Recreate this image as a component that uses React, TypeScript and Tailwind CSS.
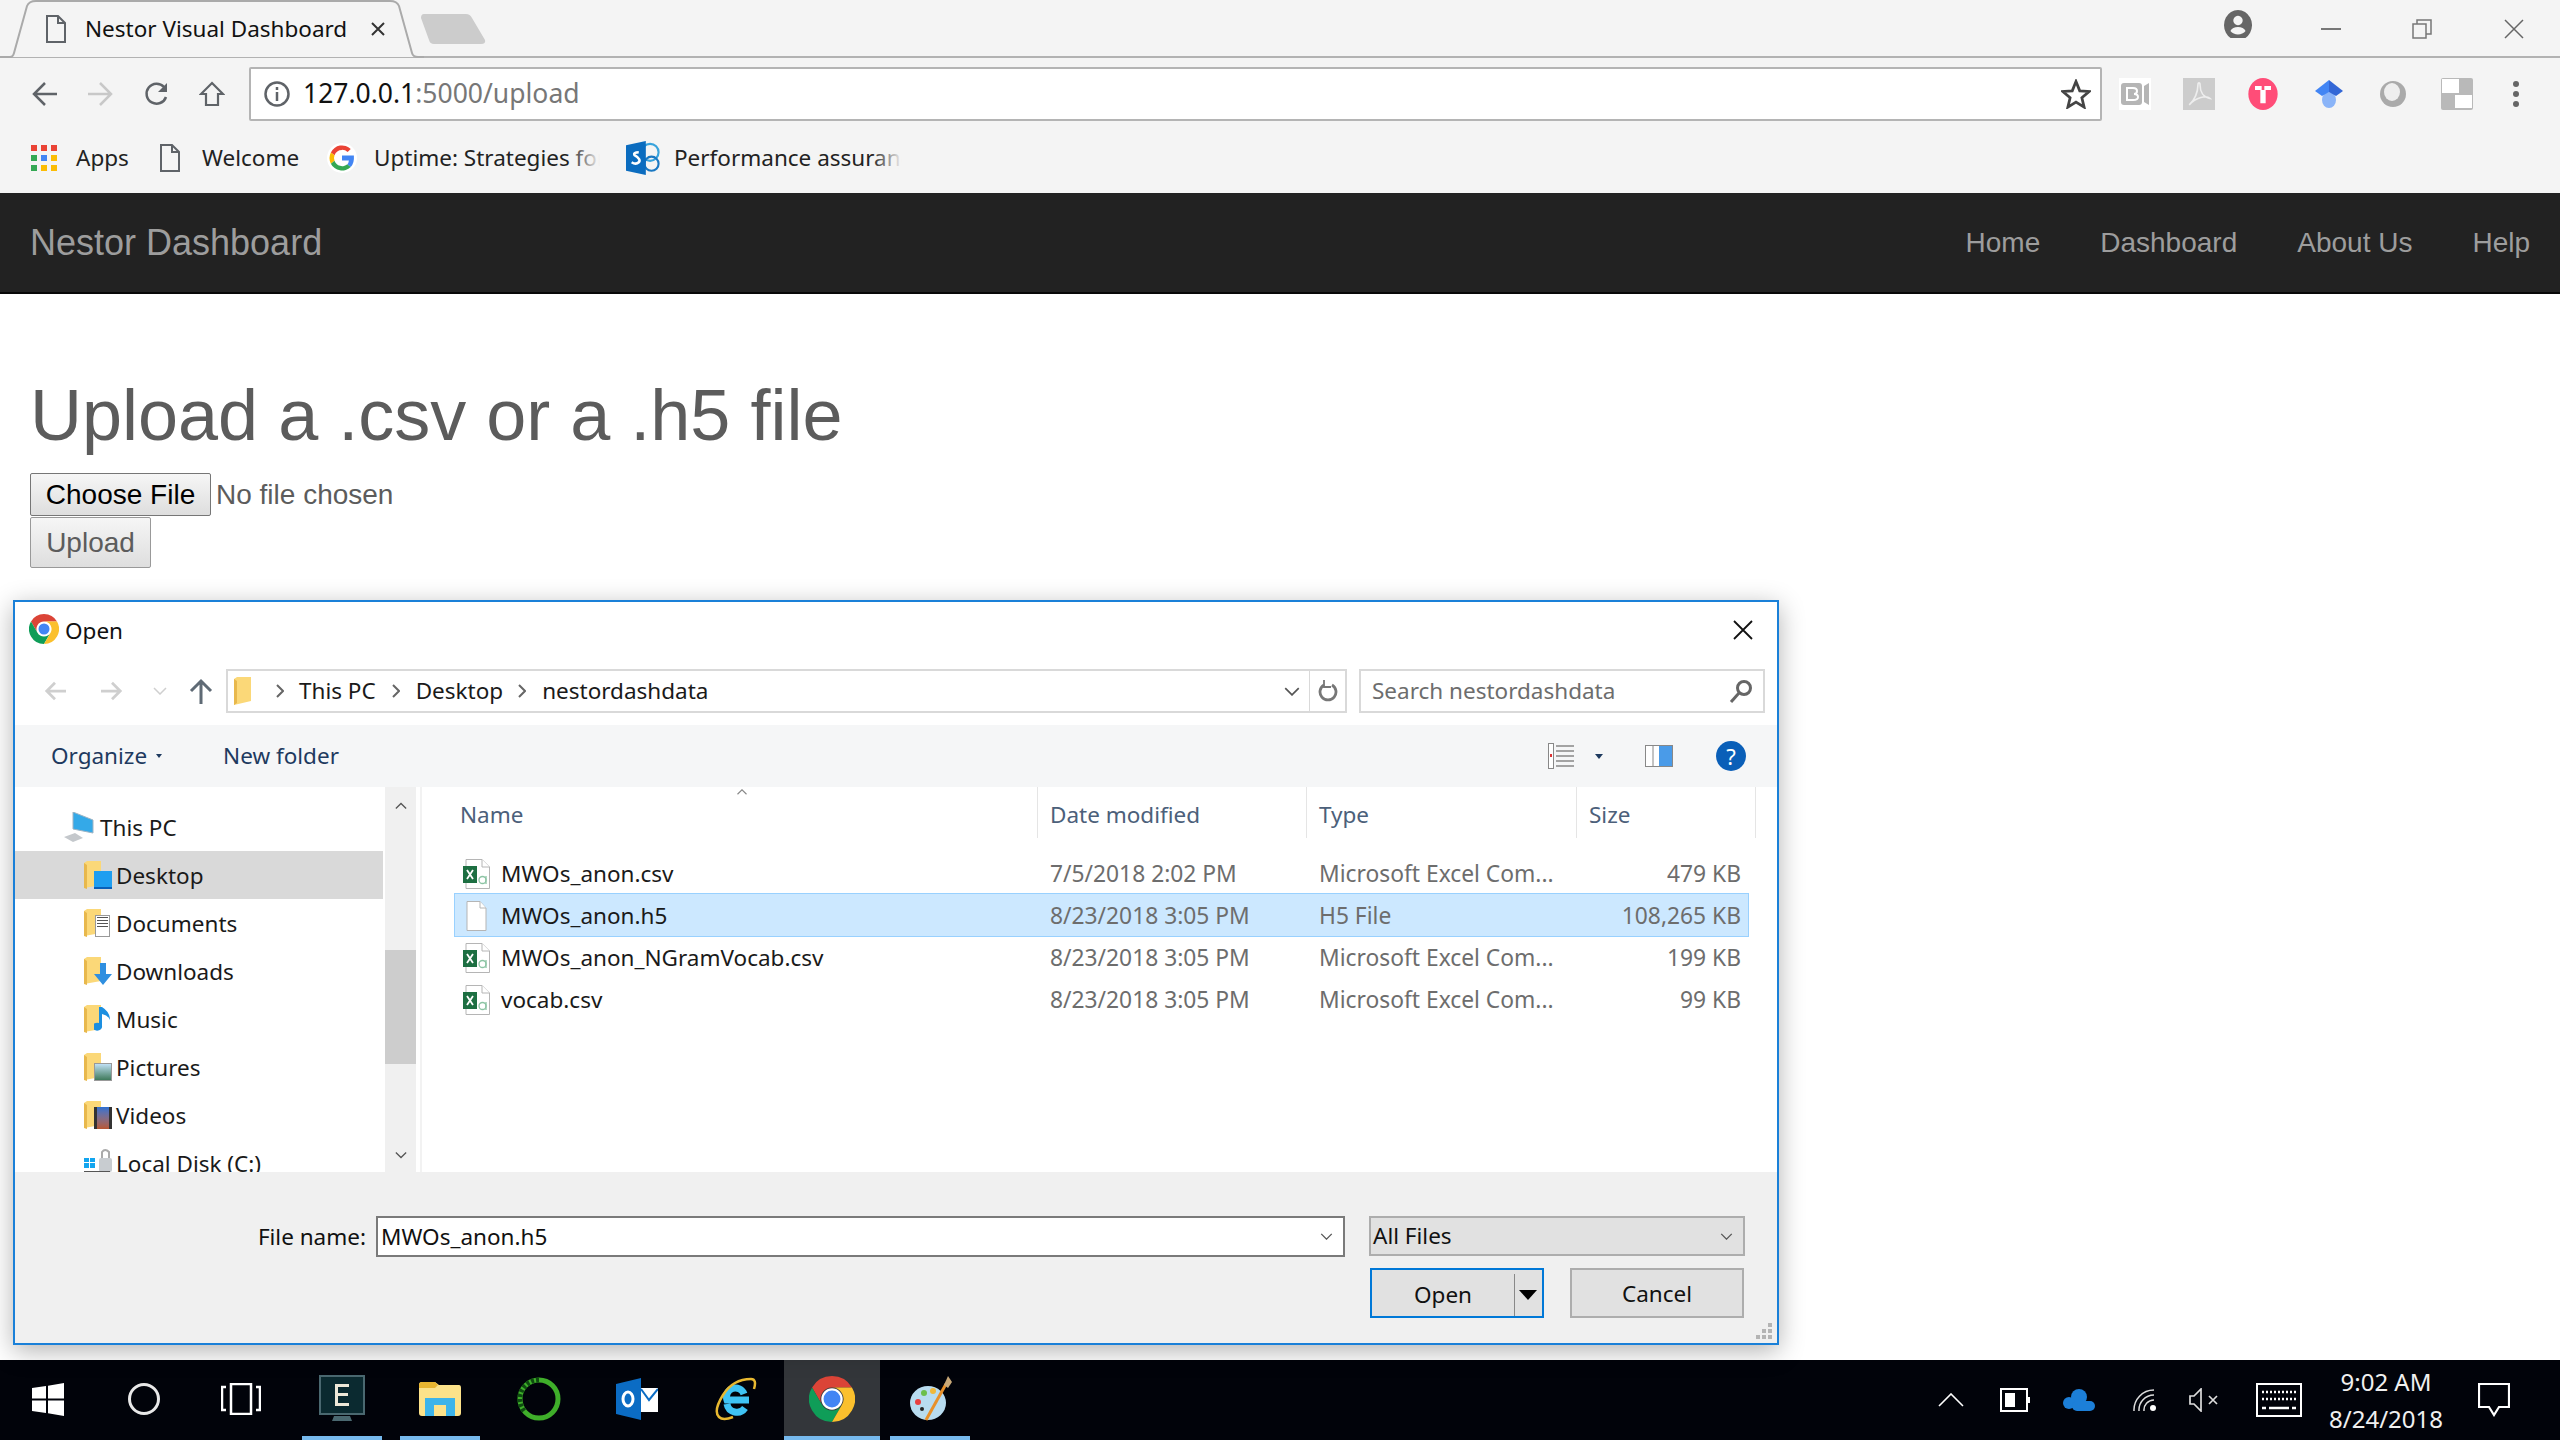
const ui = "font-['Noto_Sans',sans-serif]"

const ChromeLogo = ({ className }: { className: string }) => (
    <svg viewBox="0 0 24 24" className={className}>
        <path fill="#db4437" d="M12 0A12 12 0 0 0 1.6 6L6.8 15A6 6 0 0 1 12 6H22.4A12 12 0 0 0 12 0Z" />
        <path fill="#0f9d58" d="M1.6 6A12 12 0 0 0 12 24L17.2 15A6 6 0 0 1 6.8 15Z" />
        <path fill="#fbc02d" d="M22.4 6H12A6 6 0 0 1 17.2 15L12 24A12 12 0 0 0 22.4 6Z" />
        <circle cx="12" cy="12" r="5.6" fill="#fff" />
        <circle cx="12" cy="12" r="4.4" fill="#4285f4" />
    </svg>
)

const PageGlyph = ({ className }: { className: string }) => (
    <svg viewBox="0 0 20 28" className={className} fill="none" stroke="#5f6368" strokeWidth="2">
        <path d="M1 1H12L19 8V27H1Z" />
        <path d="M12 1V8H19" />
    </svg>
)

const TabStrip = () => (
    <div className="relative flex h-[58px] items-start border-b-2 border-[#b2b2b2]">
        <svg viewBox="0 0 424 58" className="absolute left-0 top-0 h-[58px] w-[424px]">
            <path d="M0 57H10Q13 57 14 53L27 6Q29 1 36 1H390Q397 1 399 6L412 53Q413 57 418 57H424" fill="#f4f4f4" stroke="#aaaaaa" strokeWidth="2" />
        </svg>
        <div className="relative ml-[46px] flex h-[57px] items-center">
            <PageGlyph className="h-[28px] w-[20px]" />
            <span className={`${ui} ml-[19px] w-[261px] whitespace-nowrap text-[22.5px] text-[#111]`}>Nestor Visual Dashboard</span>
            <svg viewBox="0 0 14 14" className="ml-[25px] h-[14px] w-[14px]" stroke="#333" strokeWidth="2">
                <path d="M1 1L13 13M13 1L1 13" />
            </svg>
            <svg viewBox="0 0 66 32" className="ml-[35px] h-[32px] w-[66px]">
                <path d="M4 1H46Q50 1 52 5L65 27Q66 31 61 31H14Q10 31 9 27L1 5Q1 1 4 1Z" fill="#cccccc" />
            </svg>
        </div>
        <div className="ml-auto flex h-[57px] items-center">
            <svg viewBox="0 0 24 24" className="mb-[10px] mr-[69px] h-[28px] w-[28px]">
                <path fill="#666" fillRule="evenodd" d="M12 0a12 13 0 1 0 .01 0ZM12 5a4 4 0 1 1-.01 0ZM5.500 18c1-2.500 3.500-3.500 6.500-3.500s5.500 1 6.500 3.500c-1.500 2-4 3-6.500 3s-5-1-6.500-3Z" />
            </svg>
            <div className="mr-[71px] h-[2px] w-[20px] bg-[#777]" />
            <svg viewBox="0 0 20 20" className="mr-[72px] h-[20px] w-[20px]" fill="none" stroke="#777" strokeWidth="1.500">
                <path d="M1 5H14V19H1ZM5 5V1H19V15H14" />
            </svg>
            <svg viewBox="0 0 20 20" className="mr-[36px] h-[20px] w-[20px]" stroke="#666" strokeWidth="1.500">
                <path d="M1 1L19 19M19 1L1 19" />
            </svg>
        </div>
    </div>
)

const ExtensionIcons = () => (
    <div className="ml-[17px] flex items-center">
        <div className="flex h-[32px] w-[32px] items-center justify-center bg-white">
            <svg viewBox="0 0 28 24" className="h-[24px] w-[28px]">
                <rect x="0" y="1" width="21" height="22" rx="3" fill="#b5b5b5" />
                <path d="M23 4L28 1V23L23 20Z" fill="#b5b5b5" />
                <path d="M6 6H12Q16 6 16 9T13 12Q17 12 17 15T12 18H6Z" fill="none" stroke="#fff" strokeWidth="2" />
            </svg>
        </div>
        <div className="ml-[32px] flex h-[32px] w-[32px] items-center justify-center bg-[#cccccc]">
            <svg viewBox="0 0 24 24" className="h-[26px] w-[26px]" fill="none" stroke="#eeeeee" strokeWidth="1.500">
                <path d="M3 22C8 18 11 10 11 4C11 1 13 1 13 4C13 10 16 15 22 16C19 13 9 15 3 22Z" />
            </svg>
        </div>
        <svg viewBox="0 0 24 24" className="ml-[32px] h-[32px] w-[32px]">
            <ellipse cx="12" cy="12" rx="11" ry="12" fill="#ff4d78" />
            <path d="M6 6H11V9H14V19H10V9H6ZM13 6H18V9H13Z" fill="#fff" />
        </svg>
        <svg viewBox="0 0 28 28" className="ml-[36px] h-[28px] w-[28px]">
            <ellipse cx="14" cy="20" rx="7" ry="8" fill="#8ab4f8" />
            <path d="M14 0L28 11L21 16Q14 12 14 12Z" fill="#3367d6" />
            <path d="M14 0L0 11L7 16Q14 12 14 12Z" fill="#4285f4" />
        </svg>
        <svg viewBox="0 0 28 28" className="ml-[36px] h-[28px] w-[28px]">
            <circle cx="14" cy="14" r="13" fill="#aaaaaa" />
            <ellipse cx="13" cy="12" rx="8" ry="9" fill="#eeeeee" />
        </svg>
        <div className="ml-[34px] flex h-[32px] w-[32px] flex-col rounded-[2px] bg-[#b9b9b9] p-[1px]">
            <div className="h-[14px] w-[17px] bg-white" />
            <div className="ml-auto mt-[2px] h-[13px] w-[17px] bg-white" />
        </div>
        <div className="ml-[40px] flex flex-col gap-[4px]">
            <div className="h-[6px] w-[6px] rounded-full bg-[#666]" />
            <div className="h-[6px] w-[6px] rounded-full bg-[#666]" />
            <div className="h-[6px] w-[6px] rounded-full bg-[#666]" />
        </div>
    </div>
)

const AddressRow = () => (
    <div className="flex h-[72px] items-center pb-[2px] pt-[2px]">
        <svg viewBox="0 0 26 26" className="ml-[32px] h-[26px] w-[26px]" fill="none" stroke="#5f6368" strokeWidth="2.500">
            <path d="M25 13H3M13 2L2 13L13 24" />
        </svg>
        <svg viewBox="0 0 26 26" className="ml-[29px] h-[26px] w-[26px]" fill="none" stroke="#c8c8c8" strokeWidth="2.500">
            <path d="M1 13H23M13 2L24 13L13 24" />
        </svg>
        <svg viewBox="0 0 26 26" className="ml-[31px] h-[26px] w-[26px]" fill="none" stroke="#5f6368" strokeWidth="2.500">
            <path d="M22 16A10 10 0 1 1 20 6" />
            <path d="M23 2V11H14" fill="#5f6368" stroke="none" />
        </svg>
        <svg viewBox="0 0 26 26" className="ml-[29px] h-[26px] w-[26px]" fill="none" stroke="#5f6368" strokeWidth="2.200">
            <path d="M13 2L24 13H19V24H7V13H2Z" />
        </svg>
        <div className="ml-[24px] flex h-[54px] w-[1853px] items-center rounded-[2px] border-2 border-[#b4b4b4] bg-white">
            <svg viewBox="0 0 26 26" className="ml-[13px] h-[26px] w-[26px]" fill="none" stroke="#5f6368" strokeWidth="2.500">
                <circle cx="13" cy="13" r="11.500" />
                <path d="M13 11V20M13 6V9" />
            </svg>
            <span className={`${ui} ml-[13px] text-[26.5px] text-[#111]`}>
                127.0.0.1<span className="text-[#777]">:5000/upload</span>
            </span>
            <svg viewBox="0 0 24 24" className="ml-auto mr-[9px] h-[30px] w-[30px]" fill="none" stroke="#444" strokeWidth="2.200">
                <path d="M12 2L15 9.500L22.500 10L16.700 15L18.500 22.500L12 18.500L5.500 22.500L7.300 15L1.500 10L9 9.500Z" />
            </svg>
        </div>
        <ExtensionIcons />
    </div>
)

const BookmarksRow = () => (
    <div className={`${ui} flex h-[63px] items-center pb-[8px] text-[22.5px] text-[#222]`}>
        <div className="ml-[31px] grid h-[26px] w-[26px] grid-cols-3 gap-[4px]">
            {['#ea4335', '#ea4335', '#ea4335', '#34a853', '#4285f4', '#fbbc05', '#34a853', '#fbbc05', '#fbbc05'].map((c, i) => (
                <div key={i} style={{ backgroundColor: c }} />
            ))}
        </div>
        <span className="ml-[19px] w-[55px]">Apps</span>
        <PageGlyph className="ml-[29px] h-[28px] w-[20px]" />
        <span className="ml-[22px] w-[98px]">Welcome</span>
        <svg viewBox="0 0 24 24" className="ml-[27px] h-[30px] w-[30px]">
            <circle cx="12" cy="12" r="12" fill="#fff" />
            <path d="M12 5.500A6.500 6.500 0 0 1 16.500 7.200L19 4.700A10 10 0 0 0 3.100 7.500L6 9.800A6.500 6.500 0 0 1 12 5.500Z" fill="#ea4335" />
            <path d="M6 9.800L3.100 7.500A10 10 0 0 0 3.100 16.500L6 14.200A6.500 6.500 0 0 1 6 9.800Z" fill="#fbbc05" />
            <path d="M6 14.200L3.100 16.500A10 10 0 0 0 19 19.200L16.300 17A6.500 6.500 0 0 1 6 14.200Z" fill="#34a853" />
            <path d="M21.500 10H12V14H17.500A5 5 0 0 1 16.300 17L19 19.200Q22 16 21.500 10Z" fill="#4285f4" />
        </svg>
        <span className="relative ml-[17px] w-[226px] overflow-hidden whitespace-nowrap">
            Uptime: Strategies for Building
            <span className="absolute right-0 top-0 h-full w-[30px] bg-gradient-to-r from-transparent to-[#f4f4f4]" />
        </span>
        <svg viewBox="0 0 24 24" className="ml-[26px] h-[34px] w-[34px]">
            <circle cx="17" cy="8" r="6" fill="none" stroke="#38a3dc" strokeWidth="1.500" />
            <circle cx="18" cy="16" r="5" fill="none" stroke="#1a78c2" strokeWidth="1.500" />
            <path d="M0 3L14 0V24L0 21Z" fill="#0b6cbf" />
            <path d="M4 15Q7 17 9 15T6 10Q5 8 9 8" fill="none" stroke="#fff" strokeWidth="1.800" />
        </svg>
        <span className="relative ml-[14px] w-[228px] overflow-hidden whitespace-nowrap">
            Performance assurance
            <span className="absolute right-0 top-0 h-full w-[30px] bg-gradient-to-r from-transparent to-[#f4f4f4]" />
        </span>
    </div>
)

const NavBar = () => (
    <nav className="flex h-[101px] items-center justify-between border-b-2 border-[#080808] bg-[#222222] px-[30px] font-['Liberation_Sans',sans-serif] text-[#9d9d9d]">
        <span className="text-[36px]">Nestor Dashboard</span>
        <div className="flex gap-[60px] text-[28px]">
            <span>Home</span>
            <span>Dashboard</span>
            <span>About Us</span>
            <span>Help</span>
        </div>
    </nav>
)

const FolderBase = ({ children }: { children?: React.ReactNode }) => (
    <div className="relative h-[28px] w-[28px] shrink-0">
        <svg viewBox="0 0 18 28" className="absolute left-0 top-0 h-[28px] w-[18px]">
            <path d="M0 2L3 0H17V24L0 27Z" fill="#fbd878" />
            <path d="M0 2L3 4V28L0 27Z" fill="#e8b84c" />
        </svg>
        {children}
    </div>
)

const SideRow = ({ icon, label, active }: { icon: React.ReactNode; label: string; active?: boolean }) => (
    <div className={`flex h-[48px] shrink-0 items-center pl-[69px] ${active ? 'bg-[#d9d9d9]' : ''}`}>
        {icon}
        <span className="ml-[4px] pt-[2px] text-[#1a1a1a]">{label}</span>
    </div>
)

const XlsIcon = () => (
    <svg viewBox="0 0 27 30" className="h-[30px] w-[27px] shrink-0">
        <path d="M3 .500H19L26.500 8V29.500H3Z" fill="#fff" stroke="#b5b5b5" />
        <path d="M19 .500V8H26.500" fill="#fff" stroke="#b5b5b5" />
        <path d="M0 7H14V24H0Z" fill="#1d6f42" />
        <path d="M4 11L10 20M10 11L4 20" stroke="#fff" strokeWidth="1.800" />
        <circle cx="19.500" cy="21" r="3.500" fill="none" stroke="#8cc4a4" strokeWidth="1.300" />
        <path d="M23 17V25" stroke="#8cc4a4" strokeWidth="1.300" />
    </svg>
)

const BlankFile = () => (
    <svg viewBox="0 0 27 30" className="h-[30px] w-[27px] shrink-0">
        <path d="M4 .500H17L23 7V29.500H4Z" fill="#fff" stroke="#b5b5b5" />
        <path d="M17 .500V7H23" fill="#fff" stroke="#b5b5b5" />
    </svg>
)

const files = [
    { name: 'MWOs_anon.csv', date: '7/5/2018 2:02 PM', type: 'Microsoft Excel Com...', size: '479 KB' },
    { name: 'MWOs_anon.h5', date: '8/23/2018 3:05 PM', type: 'H5 File', size: '108,265 KB', selected: true },
    { name: 'MWOs_anon_NGramVocab.csv', date: '8/23/2018 3:05 PM', type: 'Microsoft Excel Com...', size: '199 KB' },
    { name: 'vocab.csv', date: '8/23/2018 3:05 PM', type: 'Microsoft Excel Com...', size: '99 KB' },
]

const FileRow = ({ name, date, type, size, selected }: { name: string; date: string; type: string; size: string; selected?: boolean }) => (
    <div className={`ml-[32px] grid w-[1295px] grid-cols-[595px_269px_270px_152px] items-center ${selected ? '-mt-[2px] h-[44px] border border-[#99d1ff] bg-[#cce8ff] pt-[2px]' : 'h-[42px] border border-transparent'}`}>
        <div className="flex items-center pl-[8px]">
            {selected ? <BlankFile /> : <XlsIcon />}
            <span className="ml-[11px] text-[#1a1a1a]">{name}</span>
        </div>
        <span className="text-[22.8px] text-[#6d6d6d]">{date}</span>
        <span className="text-[22.8px] text-[#6d6d6d]">{type}</span>
        <span className="text-right text-[22.8px] text-[#6d6d6d]">{size}</span>
    </div>
)

const Chevron = ({ className, color = '#777' }: { className: string; color?: string }) => (
    <svg viewBox="0 0 14 8" className={className} fill="none" stroke={color} strokeWidth="1.500">
        <path d="M1 1L7 7L13 1" />
    </svg>
)

const Crumb = ({ className }: { className: string }) => (
    <svg viewBox="0 0 8 14" className={`h-[14px] w-[8px] ${className}`} fill="none" stroke="#666" strokeWidth="2">
        <path d="M1 1L7 7L1 13" />
    </svg>
)

const FileDialog = () => (
    <div className={`${ui} absolute bottom-[15px] left-[13px] flex h-[745px] w-[1766px] flex-col border-2 border-[#1a80d8] bg-white text-[22.5px] shadow-[0_6px_24px_rgba(0,0,0,0.3)]`}>
        <div className="flex h-[67px] shrink-0 items-start pt-[12px]">
            <ChromeLogo className="ml-[14px] h-[30px] w-[30px]" />
            <span className="ml-[6px] text-[#111]">Open</span>
            <svg viewBox="0 0 20 20" className="ml-auto mr-[24px] mt-[6px] h-[20px] w-[20px]" stroke="#111" strokeWidth="1.800">
                <path d="M1 1L19 19M19 1L1 19" />
            </svg>
        </div>

        <div className="flex h-[44px] shrink-0 items-center">
            <svg viewBox="0 0 24 24" className="ml-[29px] h-[22px] w-[22px]" fill="none" stroke="#cfcfcf" strokeWidth="3">
                <path d="M24 12H3M12 3L3 12L12 21" />
            </svg>
            <svg viewBox="0 0 24 24" className="ml-[35px] h-[22px] w-[22px]" fill="none" stroke="#cfcfcf" strokeWidth="3">
                <path d="M0 12H21M12 3L21 12L12 21" />
            </svg>
            <Chevron className="ml-[30px] h-[8px] w-[14px]" color="#cfcfcf" />
            <svg viewBox="0 0 24 26" className="ml-[22px] h-[26px] w-[24px]" fill="none" stroke="#5f6a75" strokeWidth="3">
                <path d="M12 26V3M2 13L12 3L22 13" />
            </svg>
            <div className="ml-[13px] flex h-[44px] w-[1121px] shrink-0 items-center border-2 border-[#d9d9d9] text-[#1a1a1a]">
                <svg viewBox="0 0 18 28" className="ml-[6px] h-[28px] w-[18px]">
                    <path d="M0 2L3 0H17V24L0 28Z" fill="#fbd878" />
                    <path d="M0 2L3 4V26L0 28Z" fill="#e8b84c" />
                </svg>
                <Crumb className="ml-[24px]" />
                <span className="ml-[15px]">This PC</span>
                <Crumb className="ml-[16px]" />
                <span className="ml-[16px]">Desktop</span>
                <Crumb className="ml-[15px]" />
                <span className="ml-[16px]">nestordashdata</span>
                <Chevron className="ml-auto mr-[9px] h-[9px] w-[16px]" color="#555" />
                <div className="flex h-full w-[36px] items-center justify-center border-l border-[#d9d9d9]">
                    <svg viewBox="0 0 20 24" className="h-[24px] w-[20px]" fill="none" stroke="#777" strokeWidth="2.800">
                        <path d="M14 6A8 8 0 1 1 6 6" />
                        <path d="M6 1V8H13" strokeWidth="1.800" />
                    </svg>
                </div>
            </div>
            <div className="ml-[12px] flex h-[44px] w-[406px] shrink-0 items-center border-2 border-[#d9d9d9] pl-[11px] text-[#6d6d6d]">
                <span>Search nestordashdata</span>
                <svg viewBox="0 0 24 24" className="ml-auto mr-[10px] h-[24px] w-[24px]" fill="none" stroke="#666" strokeWidth="3">
                    <circle cx="15" cy="9" r="6.500" />
                    <path d="M10 14L2 23" />
                </svg>
            </div>
        </div>

        <div className="mt-[12px] flex h-[62px] shrink-0 items-center bg-[#f5f6f7] text-[#1e3a5f]">
            <span className="ml-[36px]">Organize</span>
            <div className="ml-[9px] h-0 w-0 border-x-[3px] border-t-[4px] border-x-transparent border-t-[#1e3a5f]" />
            <span className="ml-[61px]">New folder</span>
            <svg viewBox="0 0 26 26" className="ml-auto h-[26px] w-[26px]" stroke="#888">
                <rect x=".5" y=".5" width="5" height="25" fill="#fff" />
                <path d="M8 3H26M8 8H26M8 13H26M8 18H26M8 23H26" strokeWidth="1.300" />
                <rect x="2" y="11" width="2" height="3" fill="#d33" stroke="none" />
            </svg>
            <div className="ml-[21px] h-0 w-0 border-x-[4px] border-t-[5px] border-x-transparent border-t-[#1e3a5f]" />
            <svg viewBox="0 0 28 22" className="ml-[42px] h-[22px] w-[28px]">
                <rect x=".5" y=".5" width="27" height="21" fill="#fff" stroke="#888" />
                <rect x="14" y="1" width="13" height="20" fill="#4a9be8" />
                <path d="M8 1V21" stroke="#888" />
            </svg>
            <div className="ml-[43px] mr-[31px] flex h-[30px] w-[30px] items-center justify-center rounded-full bg-[#0a5fb8] text-[22px] leading-none text-white">?</div>
        </div>

        <div className="flex h-[385px] shrink-0 overflow-hidden">
            <div className="flex w-[368px] shrink-0 flex-col overflow-hidden pt-[16px]">
                <div className="flex h-[48px] shrink-0 items-center pl-[49px]">
                    <svg viewBox="0 0 30 30" className="h-[30px] w-[30px] shrink-0">
                        <path d="M9 0L29 8V21L9 17Z" fill="#34a9e8" stroke="#9fb4c4" />
                        <path d="M0 25L11 21L19 26L9 30Z" fill="#c4c8cc" />
                    </svg>
                    <span className="ml-[6px] pt-[2px] text-[#1a1a1a]">This PC</span>
                </div>
                <SideRow
                    active
                    label="Desktop"
                    icon={
                        <FolderBase>
                            <div className="absolute bottom-0 right-0 h-[18px] w-[18px] border-b-2 border-[#0a5fb8] bg-[#1f9ef0]" />
                        </FolderBase>
                    }
                />
                <SideRow
                    label="Documents"
                    icon={
                        <FolderBase>
                            <div className="absolute bottom-0 right-[2px] flex h-[22px] w-[15px] flex-col gap-[2px] border border-[#999] bg-white p-[1px]">
                                <div className="h-[1px] bg-[#555]" />
                                <div className="h-[1px] bg-[#555]" />
                                <div className="h-[1px] bg-[#555]" />
                                <div className="h-[1px] bg-[#555]" />
                            </div>
                        </FolderBase>
                    }
                />
                <SideRow
                    label="Downloads"
                    icon={
                        <FolderBase>
                            <svg viewBox="0 0 18 22" className="absolute bottom-0 right-0 h-[22px] w-[18px]">
                                <path d="M6 0H12V11H18L9 22L0 11H6Z" fill="#2f8fe0" />
                            </svg>
                        </FolderBase>
                    }
                />
                <SideRow
                    label="Music"
                    icon={
                        <FolderBase>
                            <svg viewBox="0 0 18 26" className="absolute bottom-0 right-0 h-[26px] w-[18px]">
                                <path d="M8 0V19A5 4 0 1 1 5 16V0ZM8 0Q16 5 16 13Q14 8 8 7Z" fill="#1c8fe0" />
                            </svg>
                        </FolderBase>
                    }
                />
                <SideRow
                    label="Pictures"
                    icon={
                        <FolderBase>
                            <div className="absolute bottom-0 right-0 h-[18px] w-[18px] border border-[#999] bg-gradient-to-b from-[#bfe0f5] to-[#3f7a5c]" />
                        </FolderBase>
                    }
                />
                <SideRow
                    label="Videos"
                    icon={
                        <FolderBase>
                            <div className="absolute bottom-0 right-0 h-[22px] w-[18px] border-x-[3px] border-[#333] bg-gradient-to-b from-[#2b6fd0] to-[#b8562f]" />
                        </FolderBase>
                    }
                />
                <SideRow
                    label="Local Disk (C:)"
                    icon={
                        <svg viewBox="0 0 28 30" className="h-[30px] w-[28px] shrink-0">
                            <path d="M0 10H5V14H0ZM6 10H11V14H6ZM0 15H5V20H0ZM6 15H11V20H6Z" fill="#12a5ef" />
                            <rect x="15" y="10" width="13" height="14" rx="2" fill="#c8ccd0" />
                            <path d="M18 10V4Q21 0 25 4V10" fill="none" stroke="#aaa" strokeWidth="2" />
                            <rect x="0" y="23" width="26" height="7" fill="#555" />
                        </svg>
                    }
                />
            </div>
            <div className="ml-[2px] flex w-[31px] shrink-0 flex-col bg-[#f0f0f0]">
                <div className="flex h-[38px] shrink-0 items-center justify-center">
                    <Chevron className="h-[8px] w-[12px] rotate-180" color="#555" />
                </div>
                <div className="h-[125px] shrink-0" />
                <div className="h-[114px] shrink-0 bg-[#cdcdcd]" />
                <div className="mt-auto flex h-[35px] shrink-0 items-center justify-center">
                    <Chevron className="h-[8px] w-[12px]" color="#555" />
                </div>
            </div>
            <div className="ml-[4px] flex flex-1 flex-col border-l-2 border-[#f2f2f2]">
                <div className="relative flex h-[51px] shrink-0 text-[#4c607a]">
                    <Chevron className="absolute left-[314px] top-[2px] h-[6px] w-[12px] rotate-180" color="#888" />
                    <div className="flex w-[615px] items-center pl-[38px] pt-[4px]">Name</div>
                    <div className="flex w-[269px] items-center border-l border-[#e5e5e5] pl-[12px] pt-[4px]">Date modified</div>
                    <div className="flex w-[270px] items-center border-l border-[#e5e5e5] pl-[12px] pt-[4px]">Type</div>
                    <div className="flex w-[180px] items-center border-x border-[#e5e5e5] pl-[12px] pt-[4px]">Size</div>
                </div>
                <div className="mt-[15px] flex flex-col">
                    {files.map((f) => (
                        <FileRow key={f.name} {...f} />
                    ))}
                </div>
            </div>
        </div>

        <div className="relative flex flex-1 flex-col bg-[#f0f0f0] pr-[32px] pt-[44px] text-[#111]">
            <div className="flex items-start justify-end">
                <span className="mr-[10px] mt-[4px]">File name:</span>
                <div className="flex h-[41px] w-[969px] items-center border-2 border-[#7a7a7a] bg-white pl-[3px]">
                    <span>MWOs_anon.h5</span>
                    <Chevron className="ml-auto mr-[10px] h-[7px] w-[13px]" color="#555" />
                </div>
                <div className="ml-[24px] flex h-[40px] w-[376px] items-center border-2 border-[#adadad] bg-[#e1e1e1] pl-[2px]">
                    <span>All Files</span>
                    <Chevron className="ml-auto mr-[10px] h-[7px] w-[13px]" color="#555" />
                </div>
            </div>
            <div className="mt-[11px] flex justify-end pr-[1px]">
                <div className="flex h-[50px] w-[174px] items-center border-2 border-[#0078d7] bg-[#e1e1e1] pt-[3px]">
                    <span className="w-[142px] text-center">Open</span>
                    <div className="h-[42px] w-px bg-[#888]" />
                    <div className="ml-[4px] h-0 w-0 border-x-[9px] border-t-[10px] border-x-transparent border-t-black" />
                </div>
                <div className="ml-[26px] flex h-[50px] w-[174px] items-center justify-center border-2 border-[#adadad] bg-[#e1e1e1] pt-[1px]">Cancel</div>
            </div>
            <svg viewBox="0 0 18 16" className="absolute bottom-[4px] right-[4px] h-[16px] w-[18px]" fill="#b4b4b4">
                <path d="M13 0h4v4h-4zM13 6h4v4h-4zM7 6h4v4H7zM13 12h4v4h-4zM7 12h4v4H7zM1 12h4v4H1z" />
            </svg>
        </div>
    </div>
)

const TaskSlot = ({ children, open, active, className }: { children?: React.ReactNode; open?: boolean; active?: boolean; className: string }) => (
    <div className={`flex h-full flex-col items-center justify-center ${active ? 'bg-[#33363a]' : ''} ${className}`}>
        <div className="flex flex-1 items-center justify-center pt-[2px]">{children}</div>
        <div className={`h-[4px] w-full ${open ? 'bg-[#76b9ed]' : ''}`} />
    </div>
)

const TaskBar = () => (
    <footer className={`${ui} flex h-[80px] shrink-0 items-center bg-[#01030a] text-white`}>
        <TaskSlot className="ml-[1px] w-[94px]">
            <svg viewBox="0 0 32 33" className="h-[33px] w-[32px]" fill="#fff">
                <path d="M0 5L14 3V15.500H0ZM16 2.700L32 0V15.500H16ZM0 17.500H14V30L0 28ZM16 17.500H32V33L16 30.300Z" />
            </svg>
        </TaskSlot>
        <TaskSlot className="w-[98px]">
            <div className="h-[32px] w-[32px] rounded-full border-[3.500px] border-[#e8e8e8]" />
        </TaskSlot>
        <TaskSlot className="w-[109px] pr-[14px]">
            <svg viewBox="0 0 40 32" className="h-[32px] w-[40px]" fill="none" stroke="#fff" strokeWidth="2.500">
                <rect x="10" y="1" width="20" height="30" />
                <path d="M5 4H1V27H5M35 4H39V27H35" />
            </svg>
        </TaskSlot>
        <TaskSlot open className="w-[80px]">
            <svg viewBox="0 0 46 48" className="h-[48px] w-[46px]">
                <rect x="1" y="1" width="44" height="38" fill="#0b2a30" stroke="#4a6870" strokeWidth="2" />
                <path d="M16 9H30V12H19V18H29V21H19V28H30V31H16Z" fill="#eee8d8" />
                <path d="M15 41H31L33 46H13Z" fill="#4a6870" />
            </svg>
        </TaskSlot>
        <TaskSlot open className="ml-[18px] w-[80px]">
            <svg viewBox="0 0 42 34" className="h-[34px] w-[42px]">
                <path d="M0 3Q0 0 3 0H16L20 3H40Q42 3 42 6V31Q42 34 39 34H3Q0 34 0 31Z" fill="#fce28a" />
                <path d="M0 3Q0 0 3 0H16L19 3L16 6H0Z" fill="#e8b530" />
                <path d="M6 16H36V34H27V23H15V34H6Z" fill="#3db4ea" />
            </svg>
        </TaskSlot>
        <TaskSlot className="ml-[20px] w-[78px]">
            <svg viewBox="0 0 46 46" className="h-[46px] w-[46px]" fill="none">
                <circle cx="23" cy="23" r="19" stroke="#3fae2a" strokeWidth="5" />
                <path d="M23 4A19 19 0 0 0 8 35" stroke="#0e4a10" strokeWidth="5" strokeDasharray="3 2" />
            </svg>
        </TaskSlot>
        <TaskSlot className="ml-[20px] w-[78px]">
            <svg viewBox="0 0 42 42" className="h-[42px] w-[42px]">
                <path d="M0 6L25 0V42L0 36Z" fill="#0b6cc4" />
                <rect x="25" y="10" width="17" height="24" fill="#fff" />
                <path d="M25 11L33 22L42 11" fill="none" stroke="#0b6cc4" strokeWidth="2" />
                <ellipse cx="12" cy="21" rx="5" ry="7" fill="none" stroke="#fff" strokeWidth="3" />
            </svg>
        </TaskSlot>
        <TaskSlot className="ml-[20px] w-[78px]">
            <svg viewBox="0 0 44 44" className="h-[44px] w-[44px]" fill="none">
                <path d="M36 23H14A9 9 0 0 1 31 17M14 27A10 10 0 0 0 32 31" stroke="#3fc3f4" strokeWidth="7" />
                <path d="M6 40Q0 34 10 18T38 2Q44 2 41 12M6 40Q10 44 20 40" stroke="#e8b830" strokeWidth="2.500" />
            </svg>
        </TaskSlot>
        <TaskSlot open active className="ml-[10px] w-[96px]">
            <ChromeLogo className="h-[46px] w-[46px]" />
        </TaskSlot>
        <TaskSlot open className="ml-[10px] w-[80px]">
            <svg viewBox="0 0 44 46" className="h-[46px] w-[44px]">
                <ellipse cx="20" cy="27" rx="18" ry="17" fill="#b8dcf0" />
                <circle cx="10" cy="26" r="3" fill="#e84040" />
                <circle cx="16" cy="17" r="3" fill="#6cbf4b" />
                <circle cx="25" cy="15" r="3" fill="#f0b83a" />
                <circle cx="14" cy="33" r="2" fill="#222" />
                <path d="M18 44L38 8" stroke="#e8902a" strokeWidth="3" />
                <path d="M36 9L40 0L44 6L40 12Z" fill="#c8a878" />
            </svg>
        </TaskSlot>

        <div className="ml-auto flex h-full items-center">
            <svg viewBox="0 0 26 14" className="h-[14px] w-[26px]" fill="none" stroke="#fff" strokeWidth="1.600">
                <path d="M1 13L13 1L25 13" />
            </svg>
            <svg viewBox="0 0 30 24" className="ml-[36px] h-[24px] w-[30px]" fill="none" stroke="#fff" strokeWidth="2">
                <rect x="1" y="1" width="26" height="22" />
                <rect x="5" y="5" width="10" height="14" fill="#fff" stroke="none" />
                <path d="M29 9V15" />
            </svg>
            <svg viewBox="0 0 32 24" className="ml-[33px] h-[24px] w-[32px]" fill="#1c7fd8">
                <circle cx="16" cy="9" r="8" />
                <circle cx="6" cy="15" r="6" />
                <rect x="9" y="13" width="23" height="10" rx="5" />
            </svg>
            <svg viewBox="0 0 24 24" className="ml-[38px] h-[24px] w-[24px]" fill="none" stroke="#ddd" strokeWidth="1.500">
                <path d="M1 23A20 20 0 0 1 21 2M6 23A15 15 0 0 1 21 7M11 23A10 10 0 0 1 21 12" />
                <circle cx="20" cy="20" r="3" fill="#fff" stroke="none" />
            </svg>
            <svg viewBox="0 0 30 24" className="ml-[32px] h-[24px] w-[30px]" fill="none" stroke="#ddd" strokeWidth="1.700">
                <path d="M1 8H5L12 1V23L5 16H1ZM20 8L28 16M28 8L20 16" />
            </svg>
            <svg viewBox="0 0 46 34" className="ml-[37px] h-[34px] w-[46px]" fill="none" stroke="#fff" strokeWidth="2">
                <rect x="1" y="1" width="44" height="32" />
                <path d="M6 9H40M6 16H40" strokeDasharray="2 2" strokeWidth="2.500" />
                <path d="M6 25H10M13 25H33M36 25H40" strokeWidth="2.500" />
            </svg>
            <div className="ml-[19px] flex w-[130px] flex-col items-center text-[24px] leading-[37px] text-[#f0f0f0]">
                <span>9:02 AM</span>
                <span>8/24/2018</span>
            </div>
            <svg viewBox="0 0 32 34" className="ml-[27px] mr-[50px] h-[34px] w-[32px]" fill="none" stroke="#fff" strokeWidth="2.200">
                <path d="M1 1H31V24H21L16 32L11 24H1Z" />
            </svg>
        </div>
    </footer>
)

export default function App() {
    return (
        <div className="flex h-[1440px] w-[2560px] flex-col overflow-hidden bg-white">
            <div className="shrink-0 bg-[#f4f4f4]">
                <TabStrip />
                <AddressRow />
                <BookmarksRow />
            </div>
            <NavBar />
            <main className="relative flex-1 pl-[30px] font-['Liberation_Sans',sans-serif] text-[#5c5c5c]">
                <h1 className="mt-[81px] text-[72px] leading-[80px]">Upload a .csv or a .h5 file</h1>
                <div className="mt-[18px] flex items-center text-[28px]">
                    <button className="h-[43px] w-[181px] rounded-[2px] border border-[#767676] bg-gradient-to-b from-[#f6f6f6] to-[#dedede] text-black">Choose File</button>
                    <span className="ml-[5px]">No file chosen</span>
                </div>
                <button className="mt-[1px] h-[51px] w-[121px] rounded-[2px] border border-[#999] bg-gradient-to-b from-[#f6f6f6] to-[#dedede] text-[28px]">Upload</button>
                <FileDialog />
            </main>
            <TaskBar />
        </div>
    )
}
